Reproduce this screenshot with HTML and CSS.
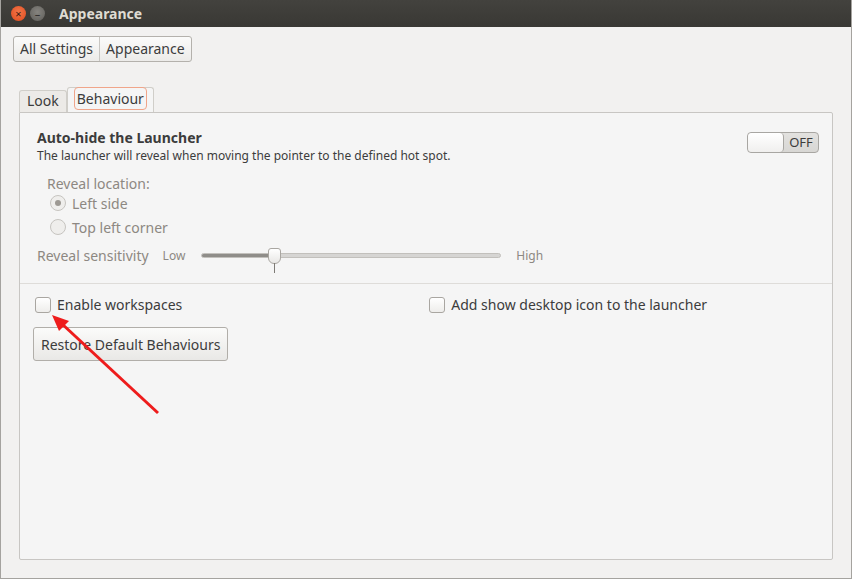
FILE: index.html
```html
<!DOCTYPE html>
<html lang="en">
<head>
    <meta charset="UTF-8">
    <title>Appearance</title>
    <link rel="stylesheet" href="styles.css">
</head>
<body>
    <div class="window">
        <div class="titlebar">
            <span class="wbtn close">&#215;</span>
            <span class="wbtn min">&#8211;</span>
            <span class="title">Appearance</span>
        </div>

        <div class="content">
            <div class="crumbs">
                <span class="crumb">All Settings</span>
                <span class="crumb">Appearance</span>
            </div>

            <div class="tabs">
                <span class="tab">Look</span>
                <span class="tab active"><span class="focus">Behaviour</span></span>
            </div>

            <div class="panel">
                <div class="autohide">
                    <div>
                        <div class="heading">Auto-hide the Launcher</div>
                        <div class="sub">The launcher will reveal when moving the pointer to the defined hot spot.</div>
                    </div>
                    <div class="switch">
                        <span class="knob"></span>
                        <span class="off">OFF</span>
                    </div>
                </div>

                <div class="reveal">
                    <div class="dim label">Reveal location:</div>
                    <div class="radio-row"><span class="radio checked"></span>Left side</div>
                    <div class="radio-row"><span class="radio"></span>Top left corner</div>
                </div>

                <div class="sens">
                    <span class="dim">Reveal sensitivity</span>
                    <span class="small">Low</span>
                    <div class="slider">
                        <div class="fill"></div>
                        <div class="thumb"></div>
                        <div class="tick"></div>
                    </div>
                    <span class="small">High</span>
                </div>

                <div class="sep"></div>

                <div class="checks">
                    <label class="check"><span class="box"></span>Enable workspaces</label>
                    <label class="check right"><span class="box"></span>Add show desktop icon to the launcher</label>
                </div>

                <button class="restore">Restore Default Behaviours</button>
            </div>
        </div>

        <svg class="arrow" width="852" height="579" viewBox="0 0 852 579">
            <line x1="157" y1="413" x2="60" y2="323" stroke="#ee1c1c" stroke-width="3"/>
            <polygon points="51,315 68,321 58,331" fill="#ee1c1c"/>
        </svg>
    </div>
</body>
</html>
```

FILE: styles.css
```css
body {
    margin: 0;
    font-family: "Noto Sans", sans-serif;
    font-size: 14px;
    color: #3c3c3c;
}

.window {
    position: relative;
    width: 852px;
    height: 579px;
    box-sizing: border-box;
    background-color: #f2f1f0;
    border: 1px solid #a5a39f;
    border-top: none;
    overflow: hidden;
}

.titlebar {
    height: 27px;
    background: linear-gradient(#43423e, #393834);
    display: flex;
    align-items: center;
    padding-left: 10px;
}

.wbtn {
    width: 15px;
    height: 15px;
    border-radius: 50%;
    display: flex;
    justify-content: center;
    align-items: center;
    font-size: 11px;
    line-height: 1;
    margin-right: 4px;
}

.close {
    background: radial-gradient(circle at 50% 40%, #f3764a, #df4a1c);
    color: #3a1a10;
}

.min {
    background: radial-gradient(circle at 50% 40%, #86847f, #5e5d59);
    color: #2e2d2a;
}

.title {
    margin-left: 10px;
    color: #dfdbd2;
    font-size: 14px;
    font-weight: bold;
}

.content {
    padding: 9px 18px 19px 11px;
}

.crumbs {
    display: inline-flex;
    margin-left: 1px;
    border: 1px solid #b4b1ac;
    border-radius: 3px;
    background: linear-gradient(#fbfbfa, #ecebe9);
}

.crumb {
    padding: 2px 6px 3px 6px;
    font-size: 14px;
}

.crumb + .crumb {
    border-left: 1px solid #c8c6c2;
}

.tabs {
    display: flex;
    align-items: flex-end;
    margin-top: 25px;
    padding-left: 7px;
    height: 25px;
}

.tab {
    height: 21px;
    padding: 0 7px;
    border: 1px solid #d0cec9;
    border-bottom: none;
    border-radius: 3px 3px 0 0;
    background-color: #eceae7;
    line-height: 20px;
}

.tab.active {
    height: 24px;
    padding: 0 6px;
    background-color: #f5f5f5;
    line-height: 22px;
}

.focus {
    border: 1px solid #f0a58a;
    border-radius: 4px;
    padding: 1px 2px;
}

.panel {
    margin-left: 7px;
    height: 448px;
    box-sizing: border-box;
    border: 1px solid #c8c6c3;
    border-radius: 0 2px 2px 2px;
    background-color: #f5f5f5;
    padding: 16px 13px 0 17px;
}

.autohide {
    display: flex;
    justify-content: space-between;
    align-items: flex-start;
}

.heading {
    font-weight: bold;
    font-size: 14px;
    line-height: 18px;
}

.sub {
    font-size: 12px;
    line-height: 18px;
}

.switch {
    display: flex;
    width: 70px;
    height: 19px;
    margin-top: 3px;
    border: 1px solid #a8a6a2;
    border-radius: 4px;
    background: linear-gradient(#e2e1df, #d8d7d4);
}

.knob {
    width: 35px;
    height: 19px;
    border-right: 1px solid #a8a6a2;
    border-radius: 4px;
    background: linear-gradient(#ffffff, #f0efee);
}

.off {
    flex: 1;
    text-align: center;
    font-size: 13px;
    line-height: 19px;
}

.dim {
    color: #8d8882;
}

.reveal {
    margin-top: 11px;
    padding-left: 10px;
}

.label {
    line-height: 15px;
}

.radio-row {
    display: flex;
    align-items: center;
    color: #8d8882;
    height: 24px;
}

.radio {
    width: 14px;
    height: 14px;
    border: 1px solid #c6c4c0;
    border-radius: 50%;
    background-color: #efeeec;
    margin: 0 6px 0 3px;
    display: flex;
    justify-content: center;
    align-items: center;
}

.radio.checked::after {
    content: "";
    width: 6px;
    height: 6px;
    border-radius: 50%;
    background-color: #9d9993;
}

.sens {
    display: flex;
    align-items: center;
    margin-top: 5px;
    height: 22px;
}

.small {
    font-size: 12px;
    color: #8d8882;
    margin-left: 14px;
}

.slider {
    position: relative;
    width: 300px;
    height: 5px;
    margin-left: 16px;
    margin-right: 1px;
    border-radius: 3px;
    background-color: #d6d5d3;
    border: 1px solid #c2c0bc;
    box-sizing: border-box;
}

.fill {
    width: 73px;
    height: 3px;
    background-color: #8f8d89;
    border-radius: 2px;
}

.thumb {
    position: absolute;
    left: 66px;
    top: -6px;
    width: 11px;
    height: 14px;
    border: 1px solid #a9a6a1;
    border-radius: 3px 3px 6px 6px;
    background: linear-gradient(#ffffff, #e8e7e5);
}

.tick {
    position: absolute;
    left: 72px;
    top: 9px;
    width: 1px;
    height: 10px;
    background-color: #7d7a75;
}

.sep {
    height: 1px;
    background-color: #dedcd9;
    margin: 17px -13px 0 -17px;
}

.checks {
    display: flex;
    margin-top: 11px;
}

.check {
    display: flex;
    align-items: center;
    margin-left: -2px;
}

.check.right {
    margin-left: 247px;
}

.box {
    width: 14px;
    height: 14px;
    border: 1px solid #a9a6a1;
    border-radius: 3px;
    background: linear-gradient(#ffffff, #eeedeb);
    margin-right: 6px;
}

.restore {
    margin-top: 13px;
    margin-left: -4px;
    height: 34px;
    padding: 0 7px;
    font-family: "Noto Sans", sans-serif;
    font-size: 14px;
    color: #3c3c3c;
    border: 1px solid #b1aea9;
    border-radius: 3px;
    background: linear-gradient(#fbfbfa, #e9e8e6);
}

.arrow {
    position: absolute;
    left: 0;
    top: 0;
    pointer-events: none;
}
```
